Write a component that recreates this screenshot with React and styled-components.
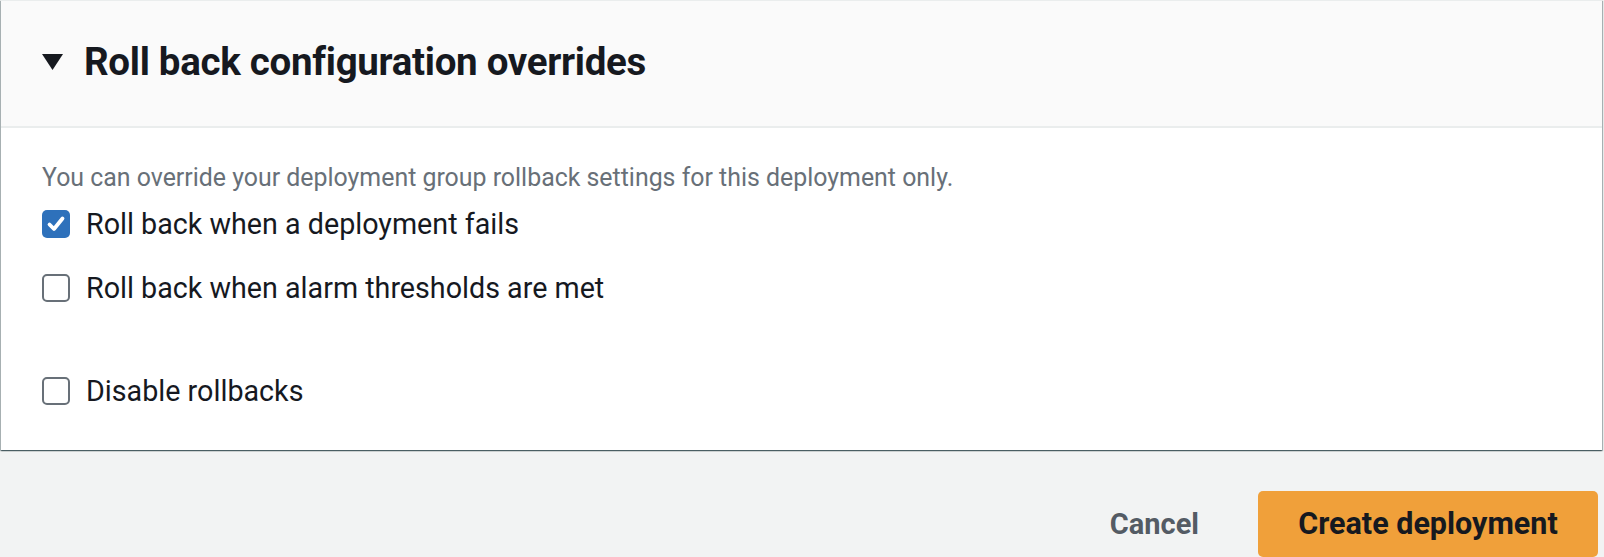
import React from "react";
import styled, { createGlobalStyle } from "styled-components";

const Global = createGlobalStyle`
  html, body { margin: 0; padding: 0; background: #f2f3f3; }
  body { font-family: Roboto, "Liberation Sans", sans-serif; color: #16191f; }
  * { box-sizing: border-box; }
`;

const Page = styled.div`
  width: 1604px;
  height: 557px;
  overflow: hidden;
  background: #f2f3f3;
  padding: 0 2px 0 1px;
`;

const Panel = styled.section`
  background: #fff;
  border-top: 1px solid #eaeded;
  box-shadow: 0 1px 1px 0 rgba(0, 28, 36, 0.45), 1px 1px 1px 0 rgba(0, 28, 36, 0.25),
    -1px 1px 1px 0 rgba(0, 28, 36, 0.25);
`;

const Header = styled.header`
  height: 127px;
  background: #fafafa;
  border-bottom: 2px solid #eaeded;
  display: flex;
  align-items: center;
  padding: 0 0 4px 41px;
  gap: 21px;
`;

const Caret = styled.svg`
  width: 21px;
  height: 16px;
  flex: none;
`;

const Title = styled.h2`
  margin: 0;
  font-size: 38.5px;
  font-weight: 700;
  letter-spacing: -0.3px;
  color: #16191f;
`;

const Body = styled.div`
  padding: 35px 41px 41px;
  display: flex;
  flex-direction: column;
`;

const Description = styled.p`
  margin: 0 0 13px;
  font-size: 24.9px;
  color: #687078;
  line-height: 30px;
`;

const Row = styled.label`
  display: flex;
  align-items: center;
  gap: 16px;
  height: 36px;
  margin-top: ${(p) => p.$gap || 0}px;
  font-size: 28.7px;
  color: #16191f;
`;

const Box = styled.span`
  width: 28px;
  height: 28px;
  border-radius: 5px;
  flex: none;
  display: flex;
  align-items: center;
  justify-content: center;
  background: ${(p) => (p.$checked ? "#2e71bb" : "#fff")};
  border: ${(p) => (p.$checked ? "none" : "2px solid #687078")};
`;

const Footer = styled.div`
  display: flex;
  justify-content: flex-end;
  align-items: center;
  padding: 41px 4px 0 0;
  gap: 59px;
`;

const CancelButton = styled.button`
  background: none;
  border: none;
  font-family: inherit;
  font-size: 29px;
  font-weight: 700;
  color: #545b64;
  padding: 0;
`;

const PrimaryButton = styled.button`
  width: 340px;
  height: 66px;
  background: #f0a03a;
  border: none;
  border-radius: 5px;
  font-family: inherit;
  font-size: 30.5px;
  font-weight: 700;
  color: #16191f;
  padding: 0 0 2px;
`;

function Check({ checked, label, gap }) {
  return (
    <Row $gap={gap}>
      <Box $checked={checked}>
        {checked && (
          <svg width="20" height="20" viewBox="0 0 20 20">
            <path d="M3.5 10.5 L8 15 L16.5 4.5" fill="none" stroke="#fff" strokeWidth="3.8" strokeLinecap="round" strokeLinejoin="round" />
          </svg>
        )}
      </Box>
      {label}
    </Row>
  );
}

export default function App() {
  return (
    <Page>
      <Global />
      <Panel>
        <Header>
          <Caret viewBox="0 0 21 16">
            <path d="M0 0 H21 L10.5 16 Z" fill="#16191f" />
          </Caret>
          <Title>Roll back configuration overrides</Title>
        </Header>
        <Body>
          <Description>
            You can override your deployment group rollback settings for this deployment only.
          </Description>
          <Check checked label="Roll back when a deployment fails" />
          <Check label="Roll back when alarm thresholds are met" gap={28} />
          <Check label="Disable rollbacks" gap={67} />
        </Body>
      </Panel>
      <Footer>
        <CancelButton>Cancel</CancelButton>
        <PrimaryButton>Create deployment</PrimaryButton>
      </Footer>
    </Page>
  );
}
